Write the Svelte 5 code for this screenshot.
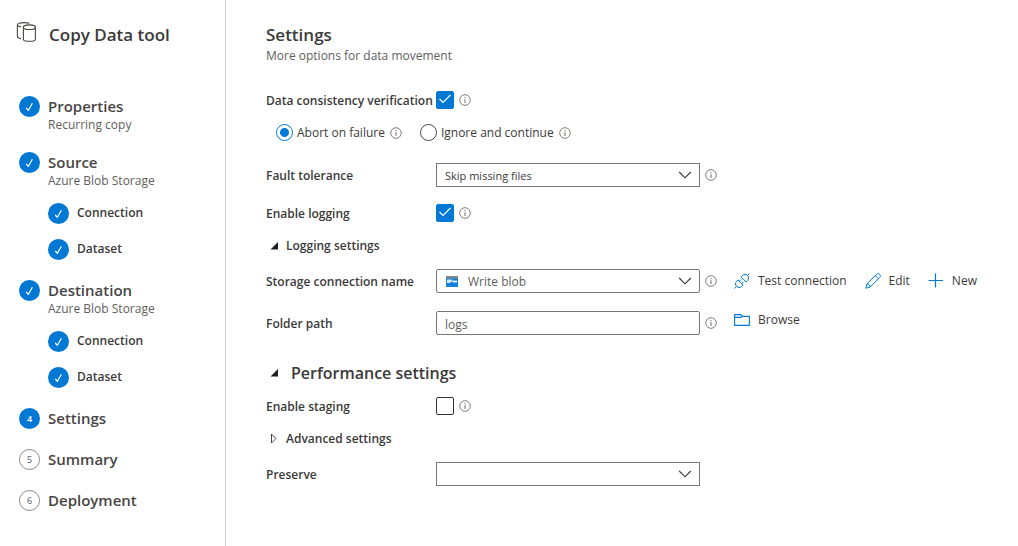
<script lang="ts">
    type SubStep = { title: string };
    type Step = {
        title: string;
        note?: string;
        state: 'done' | 'active' | 'todo';
        children?: SubStep[];
    };

    const steps: Step[] = [
        { title: 'Properties', note: 'Recurring copy', state: 'done' },
        {
            title: 'Source',
            note: 'Azure Blob Storage',
            state: 'done',
            children: [{ title: 'Connection' }, { title: 'Dataset' }]
        },
        {
            title: 'Destination',
            note: 'Azure Blob Storage',
            state: 'done',
            children: [{ title: 'Connection' }, { title: 'Dataset' }]
        },
        { title: 'Settings', state: 'active' },
        { title: 'Summary', state: 'todo' },
        { title: 'Deployment', state: 'todo' }
    ];

    let verify = $state(true);
    let onMismatch = $state('abort');
    let faultTolerance = $state('Skip missing files');
    let logging = $state(true);
    let connection = $state('Write blob');
    let folder = $state('logs');
    let staging = $state(false);
    let preserve = $state('');
    let showLogging = $state(true);
    let showPerformance = $state(true);
    let showAdvanced = $state(false);
</script>

{#snippet tick()}
    <svg class="tick" width="21" height="21" viewBox="0 0 21 21" aria-hidden="true">
        <path d="M7.2 12 L9.3 14.2 L13.4 7.2" fill="none" stroke="#fff" stroke-width="1.2" />
    </svg>
{/snippet}

{#snippet info()}
    <svg class="info" width="12" height="12" viewBox="0 0 12 12" aria-hidden="true">
        <circle cx="6" cy="6" r="5.3" fill="none" stroke="#605e5c" stroke-width="0.8" />
        <path d="M6 5.2V9M6 3V4.2" stroke="#605e5c" stroke-width="0.9" />
    </svg>
{/snippet}

{#snippet chevron()}
    <svg class="chevron" width="14" height="8" viewBox="0 0 14 8" aria-hidden="true">
        <path d="M1.2 1L7 6.8L12.8 1" fill="none" stroke="#323130" stroke-width="1.1" />
    </svg>
{/snippet}

{#snippet arrow(open: boolean)}
    <svg class="arrow" width="10" height="12" viewBox="0 0 10 12" aria-hidden="true">
        {#if open}
            <path d="M8 2V9.5H.5Z" fill="#201f1e" />
        {:else}
            <path d="M1.5 1V10L6 5.5Z" fill="none" stroke="#323130" stroke-width="0.9" />
        {/if}
    </svg>
{/snippet}

<div class="page">
    <aside>
        <header>
            <svg width="21" height="21" viewBox="0 0 21 21" fill="none" stroke="#484644" stroke-width="1.1" aria-hidden="true">
                <path d="M7.4 5V17.2C7.4 18.4 10 19.3 13.4 19.3S19.4 18.4 19.4 17.2V5" />
                <ellipse cx="13.4" cy="5.2" rx="6" ry="2.3" />
                <path d="M13.4 1.3C12 .8 10.2 .6 8 .6C4 .6 1.4 1.5 1.4 2.8C1.4 3.8 2.8 4.6 5 4.9M1.4 2.8V14.6C1.4 15.6 2.8 16.3 5 16.6" />
            </svg>
            <h1>Copy Data tool</h1>
        </header>

        <ol class="steps">
            {#each steps as step, i}
                <li class="step">
                    <span class="badge {step.state}">
                        {#if step.state === 'done'}{@render tick()}{:else}{i + 1}{/if}
                    </span>
                    <div class="body">
                        <div class="title">{step.title}</div>
                        {#if step.note}
                            <div class="note">{step.note}</div>
                        {/if}
                        {#if step.children}
                            <ol class="substeps">
                                {#each step.children as child}
                                    <li>
                                        <span class="badge done">{@render tick()}</span>
                                        <span class="subtitle">{child.title}</span>
                                    </li>
                                {/each}
                            </ol>
                        {/if}
                    </div>
                </li>
            {/each}
        </ol>
    </aside>

    <main>
        <h2>Settings</h2>
        <p class="lead">More options for data movement</p>

        <div class="row first">
            <label class="name" for="verify">Data consistency verification</label>
            <input id="verify" type="checkbox" bind:checked={verify} />
            {@render info()}
        </div>

        <div class="row radios">
            <label>
                <input type="radio" name="mismatch" value="abort" bind:group={onMismatch} />
                Abort on failure
            </label>
            {@render info()}
            <label>
                <input type="radio" name="mismatch" value="ignore" bind:group={onMismatch} />
                Ignore and continue
            </label>
            {@render info()}
        </div>

        <div class="row wide">
            <label class="name" for="fault">Fault tolerance</label>
            <div class="field">
                <select id="fault" class="small" bind:value={faultTolerance}>
                    <option>Skip missing files</option>
                </select>
                {@render chevron()}
            </div>
            {@render info()}
        </div>

        <div class="row medium">
            <label class="name" for="logging">Enable logging</label>
            <input id="logging" type="checkbox" bind:checked={logging} />
            {@render info()}
        </div>

        <button class="row toggle" aria-expanded={showLogging} onclick={() => (showLogging = !showLogging)}>
            {@render arrow(showLogging)}
            Logging settings
        </button>

        {#if showLogging}
            <div class="row compact">
                <label class="name" for="connection">Storage connection name</label>
                <div class="field rounded with-icon">
                    <svg class="blob" width="12" height="11" viewBox="0 0 12 11" aria-hidden="true">
                        <rect width="12" height="11" fill="#1380da" />
                        <rect width="12" height="2.6" fill="#7a8794" />
                        <path d="M1 3.4H5.6V4.6H11V6.6H7.4L5.6 5.4L3.6 7H1Z" fill="#dcebf8" />
                    </svg>
                    <select id="connection" bind:value={connection}>
                        <option>Write blob</option>
                    </select>
                    {@render chevron()}
                </div>
                {@render info()}
                <div class="actions">
                    <button>
                        <svg width="16" height="16" viewBox="0 0 16 16" fill="none" stroke="#0078d4" aria-hidden="true">
                            <path d="M.5 15.5L2.6 13.4M13.4 2.6L15.5 .5" />
                            <path d="M3.9 7L9 12.1L7.4 13.6C6 14.8 4 14.8 2.6 13.4S1.2 10 2.4 8.6Z" />
                            <path d="M7 3.9L12.1 9L13.6 7.4C14.8 6 14.8 4 13.4 2.6S10 1.2 8.6 2.4Z" />
                            <path d="M5.2 8.3L7.1 6.4M7.7 10.8L9.6 8.9" />
                        </svg>
                        Test connection
                    </button>
                    <button>
                        <svg width="16" height="16" viewBox="0 0 16 16" fill="none" stroke="#0078d4" aria-hidden="true">
                            <path d="M.8 15.2L2 10.8L11.6 1.2C12.5 .4 13.6 .4 14.6 1.4S15.6 3.5 14.8 4.4L5.2 14Z" />
                            <path d="M10.2 2.6L13.4 5.8M2 10.8C3.8 11 5 12.2 5.2 14" />
                        </svg>
                        Edit
                    </button>
                    <button>
                        <svg width="16" height="16" viewBox="0 0 16 16" fill="none" stroke="#0078d4" stroke-width="1.2" aria-hidden="true">
                            <path d="M7.5 .5V14.5M.5 7.5H15" />
                        </svg>
                        New
                    </button>
                </div>
            </div>

            <div class="row wide">
                <label class="name" for="folder">Folder path</label>
                <div class="field rounded">
                    <input id="folder" type="text" bind:value={folder} />
                </div>
                {@render info()}
                <div class="actions raised">
                    <button>
                        <svg width="16" height="16" viewBox="0 0 16 16" fill="none" stroke="#0078d4" stroke-width="1.1" aria-hidden="true">
                            <path d="M.6 13.4V2.6H6.8L8.4 4.4H15.4V13.4ZM.6 5.4H6.6L8.4 4.4" />
                        </svg>
                        Browse
                    </button>
                </div>
            </div>
        {/if}

        <button class="row toggle section" aria-expanded={showPerformance} onclick={() => (showPerformance = !showPerformance)}>
            {@render arrow(showPerformance)}
            Performance settings
        </button>

        {#if showPerformance}
            <div class="row">
                <label class="name" for="staging">Enable staging</label>
                <input id="staging" type="checkbox" bind:checked={staging} />
                {@render info()}
            </div>

            <button class="row toggle" aria-expanded={showAdvanced} onclick={() => (showAdvanced = !showAdvanced)}>
                {@render arrow(showAdvanced)}
                Advanced settings
            </button>

            <div class="row compact">
                <label class="name" for="preserve">Preserve</label>
                <div class="field">
                    <select id="preserve" bind:value={preserve}>
                        <option value=""></option>
                    </select>
                    {@render chevron()}
                </div>
            </div>
        {/if}
    </main>
</div>

<style>
    :global(body) {
        margin: 0;
        background: #fff;
    }

    .page {
        display: flex;
        min-height: 100vh;
        font-family: "Open Sans", "Noto Sans", sans-serif;
        font-size: 12px;
        line-height: 18px;
        color: #3b3a39;
    }

    h1, h2, p, ol {
        margin: 0;
        padding: 0;
    }

    ol {
        list-style: none;
    }

    svg {
        flex: none;
    }

    button, input, select {
        font: inherit;
        color: inherit;
        margin: 0;
    }

    button {
        border: 0;
        padding: 0;
        background: none;
        cursor: pointer;
    }

    /* sidebar */
    aside {
        box-sizing: border-box;
        flex: none;
        width: 226px;
        padding: 22px 16px;
        border-right: 1px solid #d2d0ce;
    }

    header {
        display: flex;
        gap: 12px;
        height: 24px;
    }

    h1, h2 {
        font-size: 17px;
        line-height: 25px;
        font-weight: 600;
    }

    .steps {
        display: flex;
        flex-direction: column;
        gap: 20px;
        padding: 50px 0 0 3px;
    }

    .step {
        display: flex;
        gap: 8px;
    }

    .badge {
        box-sizing: border-box;
        flex: none;
        width: 21px;
        height: 21px;
        border-radius: 50%;
        font-size: 9px;
        line-height: 21px;
        text-align: center;
    }

    .tick {
        display: block;
    }

    .done, .active {
        background: #0078d4;
        color: #fff;
    }

    .active {
        font-weight: 600;
    }

    .todo {
        border: 1px solid #8a8886;
        line-height: 19px;
        color: #605e5c;
    }

    .title {
        font-size: 15px;
        line-height: 21px;
        font-weight: 600;
        color: #484644;
    }

    .note {
        line-height: 15px;
        color: #605e5c;
    }

    .substeps {
        display: flex;
        flex-direction: column;
        gap: 15px;
        padding-top: 15px;
    }

    .substeps li {
        display: flex;
        gap: 8px;
    }

    .subtitle, .name {
        line-height: 20px;
        font-weight: 600;
    }

    /* settings form */
    main {
        flex: 1;
        min-width: 0;
        padding: 22px 16px 24px 40px;
    }

    .lead {
        color: #605e5c;
    }

    .row {
        display: flex;
        align-items: center;
        height: 24px;
        margin-top: 9px;
    }

    .row.first {
        margin-top: 23px;
    }

    .row.radios {
        height: 25px;
        margin-top: 8px;
    }

    .row.compact {
        margin-top: 11px;
    }

    .row.medium {
        margin-top: 14px;
    }

    .row.wide {
        margin-top: 18px;
    }

    .name {
        flex: none;
        width: 170px;
        padding-top: 2px;
        white-space: nowrap;
    }

    .info {
        margin-left: 5px;
    }

    input[type="checkbox"] {
        appearance: none;
        box-sizing: border-box;
        width: 18px;
        height: 18px;
        border: 1px solid #323130;
        border-radius: 2px;
    }

    input[type="checkbox"]:checked {
        border-color: #0078d4;
        background: #0078d4 url("data:image/svg+xml,%3Csvg xmlns='http://www.w3.org/2000/svg' viewBox='0 0 16 16'%3E%3Cpath d='M2.5 7L6 10.5L13.5 3' fill='none' stroke='white' stroke-width='1.1'/%3E%3C/svg%3E") center / 16px no-repeat;
    }

    .radios {
        padding-left: 10px;
    }

    .radios label {
        display: flex;
        align-items: center;
        gap: 4px;
    }

    .radios label:last-of-type {
        margin-left: 18px;
    }

    input[type="radio"] {
        appearance: none;
        box-sizing: border-box;
        width: 17px;
        height: 17px;
        border: 1px solid #484644;
        border-radius: 50%;
    }

    input[type="radio"]:checked {
        border-color: #0078d4;
        background: radial-gradient(circle, #0078d4 4px, transparent 5px);
    }

    .field {
        box-sizing: border-box;
        display: flex;
        align-items: center;
        position: relative;
        flex: 0 1 264px;
        height: 24px;
        border: 1px solid #7a7876;
    }

    .field.rounded {
        border-radius: 2px;
        color: #605e5c;
    }

    .field select, .field input {
        appearance: none;
        box-sizing: border-box;
        width: 100%;
        height: 22px;
        padding: 2px 24px 0 8px;
        border: 0;
        background: transparent;
        outline: none;
    }

    .field select.small {
        font-size: 11px;
    }

    .field.with-icon select {
        padding-left: 31px;
    }

    .blob {
        position: absolute;
        left: 9px;
        top: 6px;
    }

    .chevron {
        position: absolute;
        right: 7px;
        top: 7px;
        pointer-events: none;
    }

    .actions {
        display: flex;
        gap: 18px;
        margin-left: 17px;
    }

    .raised {
        align-self: flex-start;
    }

    .actions button {
        display: flex;
        align-items: center;
        gap: 8px;
        white-space: nowrap;
    }

    .toggle {
        gap: 6px;
        padding-left: 4px;
        font-weight: 600;
    }

    .section {
        margin-top: 26px;
        gap: 11px;
        font-size: 16px;
    }
</style>
